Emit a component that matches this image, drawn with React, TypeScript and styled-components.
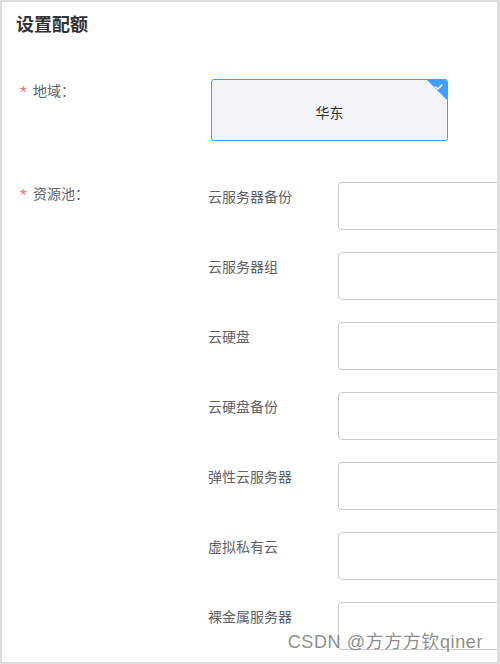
import styled, { createGlobalStyle } from 'styled-components';

const GlobalStyle = createGlobalStyle`
  html, body {
    margin: 0;
    padding: 0;
    background: #ffffff;
  }
  body {
    font-family: "Liberation Sans", "Noto Sans CJK SC", sans-serif;
  }
`;

const Frame = styled.div`
  position: relative;
  width: 500px;
  height: 664px;
  box-sizing: border-box;
  border: 2px solid #dcdcdc;
  border-right-width: 3px;
  background: #fff;
  overflow: hidden;
  padding: 11px 0 0 14px;
`;

const Title = styled.h2`
  margin: 0;
  font-size: 18px;
  line-height: 24px;
  font-weight: bold;
  color: #333333;
`;

const FormRow = styled.div<{ $top: number }>`
  display: flex;
  align-items: flex-start;
  margin-top: ${(p) => p.$top}px;
`;

const LabelCol = styled.div`
  flex: 0 0 192px;
  display: flex;
  align-items: center;
  padding-left: 4px;
  box-sizing: border-box;
  height: 20px;
  margin-top: 1px;
  font-size: 14px;
  color: #606266;
`;

const Star = styled.span`
  color: #f56c6c;
  font-size: 17px;
  width: 13px;
  position: relative;
  top: 3px;
  font-family: "Liberation Sans", sans-serif;
`;

const RegionCard = styled.div`
  position: relative;
  margin-left: 3px;
  width: 237px;
  height: 62px;
  box-sizing: border-box;
  border: 1px solid #409eff;
  border-radius: 3px;
  background: #f3f4f6;
  display: flex;
  align-items: center;
  justify-content: center;
  padding-top: 4px;
  font-size: 14px;
  color: #303133;
  overflow: hidden;
`;

const Corner = styled.svg`
  position: absolute;
  top: 0;
  right: 0;
`;

const Pool = styled.div`
  display: flex;
  flex-direction: column;
  gap: 22px;
`;

const PoolItem = styled.div`
  display: flex;
  align-items: flex-start;
`;

const PoolLabel = styled.div`
  flex: 0 0 130px;
  padding-top: 5px;
  line-height: 20px;
  font-size: 14px;
  color: #606266;
`;

const PoolInput = styled.div`
  flex: 0 0 200px;
  height: 48px;
  box-sizing: border-box;
  border: 1px solid #cccccc;
  border-radius: 4px;
  background: #fff;
`;

const Watermark = styled.div`
  position: absolute;
  right: 14px;
  bottom: 9px;
  font-size: 18px;
  color: rgba(120, 120, 120, 0.85);
  font-family: "Liberation Sans", "Noto Sans CJK SC", sans-serif;
  letter-spacing: 0.6px;
`;

const pools = [
  '云服务器备份',
  '云服务器组',
  '云硬盘',
  '云硬盘备份',
  '弹性云服务器',
  '虚拟私有云',
  '裸金属服务器',
];

export default function App() {
  return (
    <>
      <GlobalStyle />
      <Frame>
        <Title>设置配额</Title>
        <FormRow $top={42}>
          <LabelCol>
            <Star>*</Star>地域：
          </LabelCol>
          <RegionCard>
            华东
            <Corner width="20" height="20" viewBox="0 0 20 20">
              <polygon points="0,0 20,0 20,20" fill="#409eff" />
              <path d="M8 6.5 L10.8 9 L15.2 4.6" fill="none" stroke="#fff" strokeWidth="1.6" />
            </Corner>
          </RegionCard>
        </FormRow>
        <FormRow $top={41}>
          <LabelCol>
            <Star>*</Star>资源池：
          </LabelCol>
          <Pool>
            {pools.map((name) => (
              <PoolItem key={name}>
                <PoolLabel>{name}</PoolLabel>
                <PoolInput />
              </PoolItem>
            ))}
          </Pool>
        </FormRow>
        <Watermark>CSDN @方方方钦qiner</Watermark>
      </Frame>
    </>
  );
}
